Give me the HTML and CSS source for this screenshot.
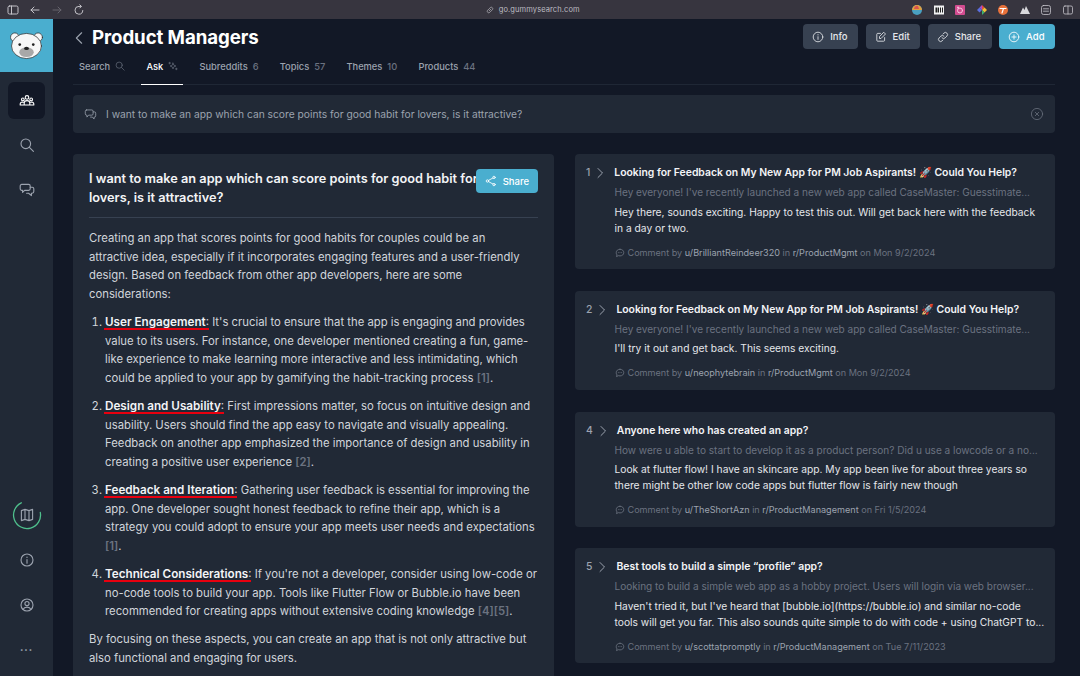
FILE: index.html
```html
<!DOCTYPE html>
<html lang="en">
<head>
  <meta charset="UTF-8">
  <title>Product Managers</title>
  <link rel="stylesheet" href="styles.css">
</head>
<body>
  <!-- browser toolbar -->
  <div class="browser-bar">
    <div class="browser-left">
      <svg class="b-icon" viewBox="0 0 12 12"><rect x="1" y="2" width="10" height="8" rx="1.5"/><path d="M4.5 2v8"/></svg>
      <svg class="b-icon" viewBox="0 0 12 12"><path d="M10 6H2M5 3 2 6l3 3"/></svg>
      <svg class="b-icon dim" viewBox="0 0 12 12"><path d="M2 6h8M7 3l3 3-3 3"/></svg>
      <svg class="b-icon" viewBox="0 0 12 12"><path d="M9.8 6.5A3.9 3.9 0 1 1 6 2.4h2M6.8 .8 8.4 2.4 6.8 4"/></svg>
    </div>
    <div class="browser-url">
      <svg class="url-link" viewBox="0 0 12 12"><path d="M5 7l2-2M4.5 5 3 6.5a1.8 1.8 0 0 0 2.500 2.500L7 7.500M7.500 7 9 5.500A1.800 1.800 0 0 0 6.500 3L5 4.500"/></svg>
      go.gummysearch.com
    </div>
    <div class="browser-right">
      <svg class="ext" viewBox="0 0 12 12"><circle cx="6" cy="6" r="5" fill="#4aa0c0"/><path d="M1 6a5 5 0 0 1 10 0z" fill="#e0a040"/><path d="M3 5a3 3 0 0 1 4-3l1 3z" fill="#d9534f"/></svg>
      <svg class="ext" viewBox="0 0 12 12"><rect x="1" y="1.5" width="10" height="9" fill="#f2f2f2"/><rect x="2.5" y="3.5" width="1.5" height="5" fill="#222"/><rect x="4.5" y="3.5" width="1.5" height="5" fill="#222"/><rect x="7" y="3.5" width="1" height="5" fill="#222"/><rect x="9" y="3.5" width="1" height="5" fill="#222"/></svg>
      <svg class="ext" viewBox="0 0 12 12"><rect x="1" y="1" width="10" height="10" rx="1" fill="#d24c8f"/><circle cx="6" cy="6.5" r="2.5" fill="none" stroke="#f5c6dc"/><circle cx="4" cy="3.5" r="1" fill="#f5c6dc"/></svg>
      <svg class="ext" viewBox="0 0 12 12"><path d="M6 1 8.5 3.5 6 6z" fill="#e84c3d"/><path d="M8.5 3.5 11 6 8.5 8.5 6 6z" fill="#f2c037"/><path d="M6 6l2.5 2.5L6 11z" fill="#3cb371"/><path d="M6 6 3.5 8.500 1 6l2.500-2.500z" fill="#5b6fe0"/><path d="M6 1 3.500 3.500 6 6z" fill="#a050d0"/></svg>
      <svg class="ext" viewBox="0 0 12 12"><circle cx="6" cy="6" r="5" fill="#e8713a"/><path d="M3 4.5h6M6.5 4.5 5 9" stroke="#fff" stroke-width="1.2" fill="none"/></svg>
      <svg class="ext" viewBox="0 0 12 12"><path d="M1 10 4 3.5 5.500 6 7 2l4 8z" fill="#d8d8dc"/></svg>
      <svg class="ext line" viewBox="0 0 12 12"><rect x="1.5" y="1.5" width="9" height="9" rx="2"/><path d="M3.5 4.8h5M3.5 7.2h5"/></svg>
      <svg class="ext line" viewBox="0 0 12 12"><rect x="1.5" y="2" width="9" height="8" rx="1.5"/><path d="M6 2v8"/></svg>
    </div>
  </div>

  <div class="app">
    <aside class="sidebar">
      <div class="logo">
        <svg class="bear" viewBox="0 0 36 30">
          <circle cx="6" cy="6.5" r="4.5" fill="#f7f7f7" stroke="#222" stroke-width=".7"/>
          <circle cx="30" cy="6.5" r="4.5" fill="#f7f7f7" stroke="#222" stroke-width=".7"/>
          <ellipse cx="18" cy="15.5" rx="15.500" ry="13" fill="#f7f7f7" stroke="#222" stroke-width=".7"/>
          <circle cx="11" cy="14" r="1.4" fill="#222"/>
          <circle cx="25" cy="14" r="1.4" fill="#222"/>
          <ellipse cx="18" cy="22" rx="7.500" ry="5" fill="#a8a8a8"/>
          <ellipse cx="18" cy="18" rx="2.500" ry="1.700" fill="#222"/>
        </svg>
      </div>
      <nav class="side-nav">
        <a class="side-item active">
          <svg class="side-icon white" viewBox="0 0 20 20"><circle cx="10" cy="5.5" r="2.2"/><circle cx="4.8" cy="8" r="1.7"/><circle cx="15.2" cy="8" r="1.7"/><path d="M6.5 15v-2.5a3.5 3 0 0 1 7 0V15zM1.5 15v-1.5a3 2.5 0 0 1 4-2M18.5 15v-1.5a3 2.5 0 0 0-4-2M1.5 15h17"/></svg>
        </a>
        <a class="side-item">
          <svg class="side-icon" viewBox="0 0 20 20"><circle cx="8.5" cy="8.5" r="6"/><path d="m13 13 5 5"/></svg>
        </a>
        <a class="side-item">
          <svg class="side-icon" viewBox="0 0 20 20"><path d="M3.5 3H12a2 2 0 0 1 2 2v3.5a2 2 0 0 1-2 2H7L4.5 13v-2.5h-1a2 2 0 0 1-2-2V5a2 2 0 0 1 2-2z"/><path d="M14 6.500h2.500a2 2 0 0 1 2 2V12a2 2 0 0 1-2 2h-1v3L12 14H9.500"/></svg>
        </a>
      </nav>
      <div class="side-bottom">
        <div class="progress">
          <svg class="ring" viewBox="0 0 30 30"><path d="M28.3 12.5A13.5 13.5 0 1 1 9.3 2.800"/></svg>
          <svg class="side-icon" viewBox="0 0 20 20"><path d="M3 4.500 7.500 3l5 1.500L17 3v12.500L12.500 17l-5-1.500L3 17zM7.500 3v12.500M12.500 4.500V17"/></svg>
        </div>
        <a class="side-item small">
          <svg class="side-icon" viewBox="0 0 20 20"><circle cx="10" cy="10" r="7.5"/><path d="M10 9.500V14M10 6.200v.6"/></svg>
        </a>
        <a class="side-item small">
          <svg class="side-icon" viewBox="0 0 20 20"><circle cx="10" cy="10" r="7.5"/><circle cx="10" cy="8.2" r="2.6"/><path d="M5 15.500c1-2 3-2.800 5-2.800s4 .8 5 2.800"/></svg>
        </a>
        <div class="dots">•••</div>
      </div>
    </aside>

    <main class="main">
      <header class="page-head">
        <div class="title-row">
          <svg class="back" viewBox="0 0 10 16"><path d="M8 2 2 8l6 6"/></svg>
          <h1>Product Managers</h1>
        </div>
        <div class="actions">
          <button class="btn">
            <svg viewBox="0 0 20 20"><circle cx="10" cy="10" r="8"/><path d="M10 9.500V14M10 6v.6"/></svg>Info
          </button>
          <button class="btn">
            <svg viewBox="0 0 20 20"><path d="M9 4H4.500A1.500 1.500 0 0 0 3 5.500v10A1.500 1.500 0 0 0 4.500 17h10a1.500 1.500 0 0 0 1.500-1.500V11M15 2.500l2.500 2.500L10 12.500H7.500V10z"/></svg>Edit
          </button>
          <button class="btn">
            <svg viewBox="0 0 20 20"><path d="M8.500 11.500a3.500 3.500 0 0 0 5 0l3-3a3.500 3.500 0 0 0-5-5L10 5M11.500 8.500a3.500 3.500 0 0 0-5 0l-3 3a3.500 3.500 0 0 0 5 5L10 15"/></svg>Share
          </button>
          <button class="btn primary">
            <svg viewBox="0 0 20 20"><circle cx="10" cy="10" r="8"/><path d="M10 6.500v7M6.500 10h7"/></svg>Add
          </button>
        </div>
      </header>

      <div class="tabs">
        <a class="tab">Search <svg class="tab-icon" viewBox="0 0 12 12"><circle cx="5" cy="5" r="3.700"/><path d="m8 8 3 3"/></svg></a>
        <a class="tab active">Ask <svg class="tab-icon" viewBox="0 0 12 12"><path d="M6 2.500 7 5l2.500 1L7 7 6 9.500 5 7 2.500 6 5 5zM2 1.500v2M1 2.500h2M10 8.500v2M9 9.500h2"/></svg></a>
        <a class="tab">Subreddits <span class="count">6</span></a>
        <a class="tab">Topics <span class="count">57</span></a>
        <a class="tab">Themes <span class="count">10</span></a>
        <a class="tab">Products <span class="count">44</span></a>
      </div>

      <div class="ask-bar">
        <svg class="ask-icon" viewBox="0 0 20 20"><path d="M4 3h8a2 2 0 0 1 2 2v4a2 2 0 0 1-2 2H7l-2.500 3v-3H4a2 2 0 0 1-2-2V5a2 2 0 0 1 2-2z"/><path d="M14 6h2a2 2 0 0 1 2 2v4a2 2 0 0 1-2 2h-.500v3L13 14h-3"/></svg>
        <span class="ask-text">I want to make an app which can score points for good habit for lovers, is it attractive?</span>
        <svg class="ask-clear" viewBox="0 0 20 20"><circle cx="10" cy="10" r="8"/><path d="m7.500 7.500 5 5M12.500 7.500l-5 5"/></svg>
      </div>

      <div class="columns">
        <section class="answer">
          <div class="answer-head">
            <h2>I want to make an app which can score points for good habit for lovers, is it attractive?</h2>
            <button class="btn primary share-btn">
              <svg viewBox="0 0 20 20"><circle cx="15" cy="4" r="2"/><circle cx="4" cy="10" r="2"/><circle cx="15" cy="16" r="2"/><path d="M13.200 5 5.800 9M5.800 11l7.400 4"/></svg>Share
            </button>
          </div>
          <div class="answer-body">
            <p>Creating an app that scores points for good habits for couples could be an attractive idea, especially if it incorporates engaging features and a user-friendly design. Based on feedback from other app developers, here are some considerations:</p>
            <ol>
              <li><strong class="mark">User Engagement</strong>: It's crucial to ensure that the app is engaging and provides value to its users. For instance, one developer mentioned creating a fun, game-like experience to make learning more interactive and less intimidating, which could be applied to your app by gamifying the habit-tracking process <span class="cite">[1]</span>.</li>
              <li><strong class="mark">Design and Usability</strong>: First impressions matter, so focus on intuitive design and usability. Users should find the app easy to navigate and visually appealing. Feedback on another app emphasized the importance of design and usability in creating a positive user experience <span class="cite">[2]</span>.</li>
              <li><strong class="mark">Feedback and Iteration</strong>: Gathering user feedback is essential for improving the app. One developer sought honest feedback to refine their app, which is a strategy you could adopt to ensure your app meets user needs and expectations <span class="cite">[1]</span>.</li>
              <li><strong class="mark">Technical Considerations</strong>: If you're not a developer, consider using low-code or no-code tools to build your app. Tools like Flutter Flow or Bubble.io have been recommended for creating apps without extensive coding knowledge <span class="cite">[4][5]</span>.</li>
            </ol>
            <p>By focusing on these aspects, you can create an app that is not only attractive but also functional and engaging for users.</p>
          </div>
        </section>

        <section class="results">
          <article class="result">
            <div class="result-head">
              <div class="rank">1 <svg class="rank-arrow" viewBox="0 0 8 12"><path d="m2 1.500 4.500 4.500L2 10.500"/></svg></div>
              <h3>Looking for Feedback on My New App for PM Job Aspirants! 🚀 Could You Help?</h3>
            </div>
            <div class="result-body">
              <p class="excerpt">Hey everyone! I've recently launched a new web app called CaseMaster: Guesstimate...</p>
              <p class="comment">Hey there, sounds exciting. Happy to test this out. Will get back here with the feedback<br>in a day or two.</p>
              <div class="meta"><svg class="meta-icon" viewBox="0 0 12 12"><path d="M6 1.500c2.800 0 4.500 1.800 4.500 4S8.800 9.500 6 9.500c-.7 0-1.300-.1-1.900-.3L1.800 10.300l.6-2A4 4 0 0 1 1.500 5.500c0-2.200 1.700-4 4.500-4z"/><path d="M4 5.500h.01M6 5.500h.01M8 5.500h.01"/></svg>Comment by <b>u/BrilliantReindeer320</b> in <b>r/ProductMgmt</b> on Mon 9/2/2024</div>
            </div>
          </article>
          <article class="result">
            <div class="result-head">
              <div class="rank">2 <svg class="rank-arrow" viewBox="0 0 8 12"><path d="m2 1.500 4.500 4.500L2 10.500"/></svg></div>
              <h3>Looking for Feedback on My New App for PM Job Aspirants! 🚀 Could You Help?</h3>
            </div>
            <div class="result-body">
              <p class="excerpt">Hey everyone! I've recently launched a new web app called CaseMaster: Guesstimate...</p>
              <p class="comment">I'll try it out and get back. This seems exciting.</p>
              <div class="meta"><svg class="meta-icon" viewBox="0 0 12 12"><path d="M6 1.500c2.800 0 4.500 1.800 4.500 4S8.800 9.500 6 9.500c-.7 0-1.300-.1-1.900-.3L1.800 10.300l.6-2A4 4 0 0 1 1.500 5.500c0-2.200 1.700-4 4.500-4z"/><path d="M4 5.500h.01M6 5.500h.01M8 5.500h.01"/></svg>Comment by <b>u/neophytebrain</b> in <b>r/ProductMgmt</b> on Mon 9/2/2024</div>
            </div>
          </article>
          <article class="result">
            <div class="result-head">
              <div class="rank">4 <svg class="rank-arrow" viewBox="0 0 8 12"><path d="m2 1.500 4.500 4.500L2 10.500"/></svg></div>
              <h3>Anyone here who has created an app?</h3>
            </div>
            <div class="result-body">
              <p class="excerpt">How were u able to start to develop it as a product person? Did u use a lowcode or a no...</p>
              <p class="comment">Look at flutter flow! I have an skincare app. My app been live for about three years so<br>there might be other low code apps but flutter flow is fairly new though</p>
              <div class="meta"><svg class="meta-icon" viewBox="0 0 12 12"><path d="M6 1.500c2.800 0 4.500 1.800 4.500 4S8.800 9.500 6 9.500c-.7 0-1.300-.1-1.900-.3L1.800 10.300l.6-2A4 4 0 0 1 1.500 5.500c0-2.200 1.700-4 4.500-4z"/><path d="M4 5.500h.01M6 5.500h.01M8 5.500h.01"/></svg>Comment by <b>u/TheShortAzn</b> in <b>r/ProductManagement</b> on Fri 1/5/2024</div>
            </div>
          </article>
          <article class="result">
            <div class="result-head">
              <div class="rank">5 <svg class="rank-arrow" viewBox="0 0 8 12"><path d="m2 1.500 4.500 4.500L2 10.500"/></svg></div>
              <h3>Best tools to build a simple “profile” app?</h3>
            </div>
            <div class="result-body">
              <p class="excerpt">Looking to build a simple web app as a hobby project. Users will login via web browser...</p>
              <p class="comment">Haven't tried it, but I've heard that [bubble.io](https://bubble.io) and similar no-code<br>tools will get you far. This also sounds quite simple to do with code + using ChatGPT to...</p>
              <div class="meta"><svg class="meta-icon" viewBox="0 0 12 12"><path d="M6 1.500c2.800 0 4.500 1.800 4.500 4S8.800 9.500 6 9.500c-.7 0-1.300-.1-1.900-.3L1.800 10.300l.6-2A4 4 0 0 1 1.500 5.500c0-2.200 1.700-4 4.500-4z"/><path d="M4 5.500h.01M6 5.500h.01M8 5.500h.01"/></svg>Comment by <b>u/scottatpromptly</b> in <b>r/ProductManagement</b> on Tue 7/11/2023</div>
            </div>
          </article>
        </section>
      </div>
    </main>
  </div>
</body>
</html>
```

FILE: styles.css
```css
* {
  box-sizing: border-box;
}

html, body {
  margin: 0;
  height: 676px;
  overflow: hidden;
}

body {
  font-family: 'Inter', 'Liberation Sans', sans-serif;
  background: #121826;
  color: #e5e7eb;
  display: flex;
  flex-direction: column;
}

svg {
  fill: none;
  stroke: currentColor;
  stroke-linecap: round;
  stroke-linejoin: round;
  flex-shrink: 0;
}

/* browser toolbar */
.browser-bar {
  height: 19px;
  background: #37353f;
  display: flex;
  align-items: center;
  justify-content: space-between;
  flex-shrink: 0;
}

.browser-left {
  display: flex;
  align-items: center;
  gap: 10px;
  padding-left: 7px;
  color: #c4c3c9;
}

.b-icon {
  width: 12px;
  height: 12px;
  stroke-width: 1;
}

.b-icon.dim {
  color: #66646d;
}

.browser-url {
  display: flex;
  align-items: center;
  gap: 4px;
  font-size: 7.5px;
  color: #bdbcc2;
  letter-spacing: .1px;
  margin-left: 68px;
}

.url-link {
  width: 10px;
  height: 10px;
  stroke-width: .8;
}

.browser-right {
  display: flex;
  align-items: center;
  gap: 9.5px;
  padding-right: 6px;
}

.ext {
  width: 12px;
  height: 12px;
  stroke: none;
}

.ext.line {
  stroke: #c4c3c9;
  stroke-width: .8;
}

/* app shell */
.app {
  flex: 1;
  display: flex;
  min-height: 0;
}

.sidebar {
  width: 53px;
  background: #212936;
  display: flex;
  flex-direction: column;
  flex-shrink: 0;
}

.logo {
  height: 53px;
  background: #4aaecf;
  display: flex;
  align-items: center;
  justify-content: center;
}

.bear {
  width: 35px;
  height: 29px;
  stroke: none;
}

.side-nav {
  display: flex;
  flex-direction: column;
  align-items: center;
  gap: 7.5px;
  padding-top: 10px;
}

.side-item {
  width: 37px;
  height: 37px;
  border-radius: 6px;
  display: flex;
  align-items: center;
  justify-content: center;
  color: #9ca3af;
}

.side-item.active {
  background: #121826;
}

.side-icon {
  width: 16px;
  height: 16px;
  stroke-width: 1.4;
}

.side-icon.white {
  color: #fff;
}

.side-bottom {
  margin-top: auto;
  display: flex;
  flex-direction: column;
  align-items: center;
  gap: 8px;
  padding-bottom: 8px;
}

.progress {
  width: 30px;
  height: 30px;
  position: relative;
  display: flex;
  align-items: center;
  justify-content: center;
  color: #9ca3af;
  margin-bottom: 3px;
}

.ring {
  position: absolute;
  inset: 0;
  color: #4fc08d;
  stroke-width: 1.3;
}

.dots {
  height: 37px;
  display: flex;
  align-items: center;
  font-size: 6px;
  letter-spacing: 1px;
  color: #9ca3af;
}

/* main column */
.main {
  flex: 1;
  padding: 5px 25px 0 20px;
  min-width: 0;
}

.page-head {
  display: flex;
  justify-content: space-between;
  align-items: center;
  height: 25px;
}

.title-row {
  display: flex;
  align-items: center;
  gap: 8px;
  padding: 2px 0 0 1px;
}

.back {
  width: 10px;
  height: 14px;
  color: #9ca3af;
  stroke-width: 1.3;
}

h1 {
  margin: 0;
  font-size: 18.7px;
  font-weight: 700;
  color: #fff;
  letter-spacing: -.1px;
}

.actions {
  display: flex;
  gap: 7.5px;
}

.btn {
  height: 25px;
  padding: 0 10.5px 0 9px;
  border: none;
  border-radius: 4px;
  background: #374151;
  color: #e5e7eb;
  font-family: inherit;
  font-size: 9.5px;
  font-weight: 500;
  display: flex;
  align-items: center;
  gap: 6px;
}

.btn svg {
  width: 12px;
  height: 12px;
  stroke-width: 1.4;
}

.btn.primary {
  background: #4aaecf;
  color: #fff;
}

.tabs {
  display: flex;
  gap: 11.25px;
  height: 31px;
  margin-top: 5px;
  padding-left: 1px;
  border-bottom: 1px solid #1f2735;
}

.tab {
  height: 31px;
  padding: 6.5px 5px 0;
  font-size: 9.3px;
  font-weight: 500;
  color: #9ca3af;
  display: flex;
  align-items: flex-start;
  gap: 5px;
}

.tab.active {
  color: #fff;
  border-bottom: 1px solid #fff;
}

.tab-icon {
  width: 10px;
  height: 10px;
  stroke-width: .8;
  color: #6b7280;
}

.count {
  color: #6b7280;
}

.ask-bar {
  height: 38px;
  margin-top: 10px;
  padding: 0 11px;
  background: #212936;
  border-radius: 4px;
  display: flex;
  align-items: center;
  gap: 9px;
  color: #9ca3af;
}

.ask-icon {
  width: 13px;
  height: 13px;
  stroke-width: 1.2;
}

.ask-text {
  flex: 1;
  font-size: 10.25px;
}

.ask-clear {
  width: 14px;
  height: 14px;
  color: #6b7280;
  stroke-width: 1.1;
}

.columns {
  display: grid;
  grid-template-columns: 481px 480px;
  gap: 21px;
  margin-top: 21px;
  align-items: start;
}

/* answer card */
.answer {
  background: #212936;
  border-radius: 4px 4px 0 0;
  padding: 15px 16px 0;
  height: 522px;
  overflow: hidden;
}

.answer-head {
  position: relative;
  padding-bottom: 10px;
  border-bottom: 1px solid #374151;
}

h2 {
  margin: 0;
  padding-right: 40px;
  font-size: 12.74px;
  line-height: 19px;
  font-weight: 600;
  color: #f3f4f6;
}

.share-btn {
  position: absolute;
  top: 0;
  right: 0;
  height: 24px;
  padding: 0 9px;
}

.answer-body {
  font-size: 11.3px;
  line-height: 18.67px;
  color: #d1d5db;
  margin-top: 11px;
}

.answer-body p {
  margin: 0;
}

.answer-body ol {
  margin: 9.33px 0 0;
  padding-left: 16px;
}

.answer-body li {
  margin-bottom: 9.33px;
}

.answer-body strong {
  font-size: 11.7px;
  font-weight: 600;
  color: #f3f4f6;
}

.mark {
  position: relative;
}

.mark::after {
  content: "";
  position: absolute;
  left: -1px;
  right: -3px;
  bottom: -1px;
  height: 2px;
  background: #e8000f;
}

.cite {
  color: #6b7280;
  font-weight: 600;
}

/* result cards */
.results {
  display: flex;
  flex-direction: column;
  gap: 21.8px;
}

.result {
  background: #212936;
  border-radius: 4px;
  padding: 11px 12px 0 11px;
  height: 115px;
}

.result:nth-child(2) {
  height: 99px;
}

.result-head {
  display: flex;
  gap: 10px;
}

.rank {
  font-size: 10.4px;
  color: #9ca3af;
  font-weight: 500;
  display: flex;
  align-items: flex-start;
  gap: 6px;
  line-height: 15px;
  flex-shrink: 0;
}

.rank-arrow {
  width: 8px;
  height: 12px;
  margin-top: 2px;
  stroke-width: 1;
}

.result-body {
  padding-left: 28.5px;
}

h3 {
  margin: 0;
  font-size: 10.4px;
  line-height: 15px;
  font-weight: 600;
  color: #f3f4f6;
}

.excerpt {
  margin: 5px 0 0;
  font-size: 10.05px;
  line-height: 15.6px;
  color: #6b7280;
  white-space: nowrap;
}

.comment {
  margin: 3px 0 0;
  font-size: 10.25px;
  line-height: 16px;
  color: #e5e7eb;
  white-space: nowrap;
}

.meta {
  margin-top: 11px;
  font-size: 9.1px;
  color: #6b7280;
}

.meta b {
  font-weight: 400;
  color: #9ca3af;
}

.meta-icon {
  width: 10px;
  height: 10px;
  margin-right: 3px;
  vertical-align: -2px;
  stroke-width: 1;
}
```
